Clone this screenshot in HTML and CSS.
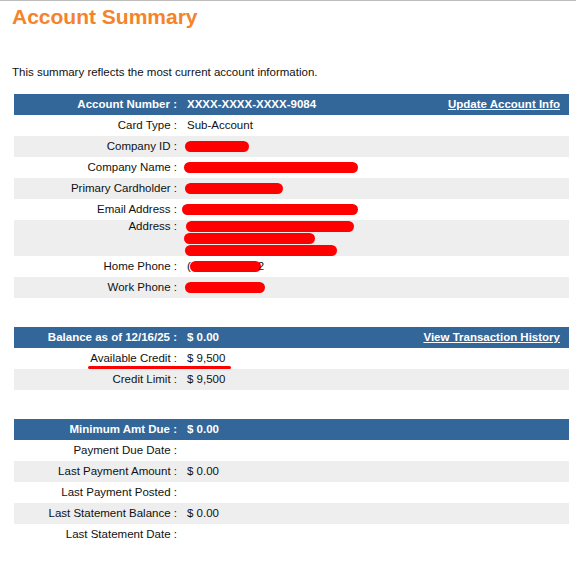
FILE: index.html
```html
<!DOCTYPE html>
<html>
<head>
<meta charset="utf-8">
<link rel="stylesheet" href="styles.css">
</head>
<body>
<div class="page">
  <h1 class="title">Account Summary</h1>
  <p class="intro">This summary reflects the most current account information.</p>

  <section class="panel">
    <div class="row head">
      <div class="lbl">Account Number :</div>
      <div class="val">XXXX-XXXX-XXXX-9084</div>
      <a class="link" href="#">Update Account Info</a>
    </div>
    <div class="row"><div class="lbl">Card Type :</div><div class="val">Sub-Account</div></div>
    <div class="row alt"><div class="lbl">Company ID :</div><div class="val"><span class="redact r-id"></span></div></div>
    <div class="row"><div class="lbl">Company Name :</div><div class="val"><span class="redact r-name"></span></div></div>
    <div class="row alt"><div class="lbl">Primary Cardholder :</div><div class="val"><span class="redact r-holder"></span></div></div>
    <div class="row"><div class="lbl">Email Address :</div><div class="val"><span class="redact r-email"></span></div></div>
    <div class="row alt addr">
      <div class="lbl">Address :</div>
      <div class="val lines">
        <span class="line"><span class="redact r-a1"></span></span>
        <span class="line"><span class="redact r-a2"></span></span>
        <span class="line"><span class="redact r-a3"></span></span>
      </div>
    </div>
    <div class="row"><div class="lbl">Home Phone :</div><div class="val">(<span class="redact r-home"></span><span class="tail">2</span></div></div>
    <div class="row alt"><div class="lbl">Work Phone :</div><div class="val"><span class="redact r-work"></span></div></div>
  </section>

  <section class="panel">
    <div class="row head">
      <div class="lbl">Balance as of 12/16/25 :</div>
      <div class="val">$ 0.00</div>
      <a class="link" href="#">View Transaction History</a>
    </div>
    <div class="row marked"><div class="lbl">Available Credit :</div><div class="val">$ 9,500</div><span class="mark"></span></div>
    <div class="row alt"><div class="lbl">Credit Limit :</div><div class="val">$ 9,500</div></div>
  </section>

  <section class="panel">
    <div class="row head">
      <div class="lbl">Minimum Amt Due :</div>
      <div class="val">$ 0.00</div>
    </div>
    <div class="row"><div class="lbl">Payment Due Date :</div><div class="val"></div></div>
    <div class="row alt"><div class="lbl">Last Payment Amount :</div><div class="val">$ 0.00</div></div>
    <div class="row"><div class="lbl">Last Payment Posted :</div><div class="val"></div></div>
    <div class="row alt"><div class="lbl">Last Statement Balance :</div><div class="val">$ 0.00</div></div>
    <div class="row"><div class="lbl">Last Statement Date :</div><div class="val"></div></div>
  </section>
</div>
</body>
</html>
```

FILE: styles.css
```css
html, body {
  margin: 0;
  padding: 0;
  background: #ffffff;
}

body {
  font-family: "Liberation Sans", Arial, sans-serif;
  font-size: 11.5px;
  color: #111111;
  border-top: 1px solid #bdbdbd;
}

.page {
  padding: 0 7px 0 0;
}

.title {
  margin: 4px 0 0 12px;
  font-size: 21px;
  line-height: 24px;
  font-weight: bold;
  color: #f5832a;
}

.intro {
  margin: 36px 0 15px 12px;
  line-height: 14px;
}

.panel {
  margin: 0 0 29px 14px;
}

.row {
  display: flex;
  align-items: center;
  height: 21px;
  line-height: 21px;
  position: relative;
}

.row.alt {
  background: #eeeeee;
}

.row.head {
  background: #336699;
  color: #ffffff;
  font-weight: bold;
}

.lbl {
  width: 163px;
  flex: none;
  text-align: right;
  white-space: nowrap;
}

.val {
  padding-left: 10px;
  white-space: nowrap;
  display: flex;
  align-items: center;
}

.link {
  margin-left: auto;
  margin-right: 9px;
  color: #ffffff;
  text-decoration: underline;
}

.redact {
  display: inline-block;
  height: 11px;
  background: #ff0000;
  border-radius: 6px;
  margin-left: -2px;
}

.r-id { width: 64px; }
.r-name { width: 174px; margin-left: -3px; }
.r-holder { width: 98px; }
.r-email { width: 176px; margin-left: -5px; }
.r-a1 { width: 168px; margin-left: -1px; }
.r-a2 { width: 131px; margin-left: -3px; }
.r-a3 { width: 152px; }
.r-home { width: 71px; margin-left: -1px; }
.r-work { width: 80px; }

.tail {
  margin-left: -3px;
}

.row.addr {
  height: 36px;
  align-items: flex-start;
  line-height: 13px;
}

.lines {
  flex-direction: column;
  align-items: flex-start;
}

.line {
  display: flex;
  align-items: center;
  height: 12px;
}

.mark {
  position: absolute;
  left: 74px;
  top: 18px;
  width: 143px;
  height: 3px;
  border-radius: 2px;
  background: #ff0000;
}
```
